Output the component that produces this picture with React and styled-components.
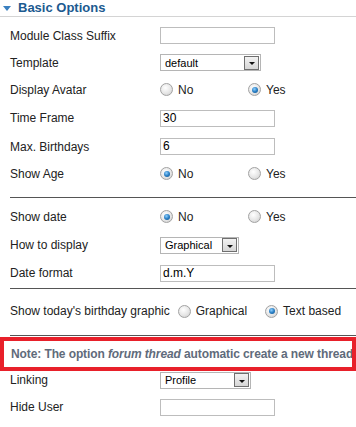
import styled, { createGlobalStyle } from 'styled-components';

const GlobalStyle = createGlobalStyle`
  html, body {
    margin: 0;
    padding: 0;
    background: #fff;
  }
  body {
    font-family: "Liberation Sans", Arial, sans-serif;
    font-size: 12px;
    color: #222;
  }
`;

const Panel = styled.div`
  width: 356px;
  height: 427px;
  overflow: hidden;
  display: flex;
  flex-direction: column;
`;

const Header = styled.div`
  height: 16px;
  border-bottom: 1px solid #d4d4d4;
  display: flex;
  align-items: center;
  gap: 7px;
  padding-left: 3px;
  margin-bottom: 5px;
`;

const Arrow = styled.span`
  width: 0;
  height: 0;
  border-left: 4px solid transparent;
  border-right: 4px solid transparent;
  border-top: 5px solid #3a80c0;
  margin-top: 1px;
`;

const Title = styled.span`
  font-size: 13px;
  font-weight: bold;
  color: #1c5a90;
  line-height: 16px;
`;

const Row = styled.div`
  height: ${p => p.h}px;
  margin-top: ${p => p.mt || 0}px;
  padding-left: 10px;
  display: flex;
  align-items: center;
  flex-shrink: 0;
`;

const Label = styled.span`
  width: ${p => (p.inline ? 'auto' : '150px')};
  margin-right: ${p => (p.inline ? '8px' : '0')};
  flex-shrink: 0;
  white-space: nowrap;
`;

const TextInput = styled.div`
  width: 111px;
  height: 15px;
  border: 1px solid #bdbdbd;
  padding-left: 2px;
  font-size: 12px;
  line-height: 15px;
  color: #000;
`;

const Select = styled.div`
  width: ${p => p.w}px;
  height: 15px;
  border: 1px solid #b5b5b5;
  display: flex;
  align-items: center;
  justify-content: space-between;
  font-size: 11px;
  color: #000;
  padding-left: 4px;
  box-sizing: content-box;
`;

const SelectButton = styled.span`
  width: 13px;
  height: 12px;
  margin-right: 1px;
  border: 1px solid #6f6f6f;
  background: linear-gradient(#f2f2f2, #d6d6d6);
  display: flex;
  align-items: center;
  justify-content: center;
  &::after {
    content: '';
    border-left: 3px solid transparent;
    border-right: 3px solid transparent;
    border-top: 3px solid #111;
    margin-top: 2px;
  }
`;

const Option = styled.span`
  display: flex;
  align-items: center;
  gap: 5px;
  width: ${p => (p.w ? `${p.w}px` : 'auto')};
  margin-right: ${p => p.mr || 0}px;
  white-space: nowrap;
`;

const Radio = styled.span`
  width: 11px;
  height: 11px;
  border-radius: 50%;
  border: 1px solid #a2a2a2;
  background: radial-gradient(circle at 40% 35%, #ffffff 0%, #e6e6e6 55%, #c9c9c9 100%);
  display: flex;
  align-items: center;
  justify-content: center;
  flex-shrink: 0;
  &::after {
    content: '';
    display: ${p => (p.checked ? 'block' : 'none')};
    width: 6px;
    height: 6px;
    border-radius: 50%;
    background: radial-gradient(circle at 40% 35%, #8fd0ff 0%, #2a7fc4 50%, #0d4f8a 100%);
  }
`;

const Divider = styled.div`
  height: 1px;
  margin-left: 10px;
  margin-top: ${p => p.mt || 0}px;
  background: #555;
  flex-shrink: 0;
`;

const Note = styled.div`
  height: 26px;
  margin-top: 1px;
  border: 4px solid #e8202a;
  padding-left: 7px;
  display: flex;
  align-items: center;
  white-space: nowrap;
  overflow: hidden;
  font-weight: bold;
  letter-spacing: -0.1px;
  color: #5f6b7b;
  flex-shrink: 0;
  em {
    font-style: italic;
  }
`;

function RadioPair({ value, labels = ['No', 'Yes'], widths = [88] }) {
  return (
    <>
      {labels.map((l, i) => (
        <Option key={l} w={widths[i]}>
          <Radio checked={value === i} />
          {l}
        </Option>
      ))}
    </>
  );
}

export default function App() {
  return (
    <Panel>
      <GlobalStyle />
      <Header>
        <Arrow />
        <Title>Basic Options</Title>
      </Header>

      <Row h={27}>
        <Label>Module Class Suffix</Label>
        <TextInput />
      </Row>
      <Row h={27}>
        <Label>Template</Label>
        <Select w={95}>
          default
          <SelectButton />
        </Select>
      </Row>
      <Row h={27}>
        <Label>Display Avatar</Label>
        <RadioPair value={1} />
      </Row>
      <Row h={30}>
        <Label>Time Frame</Label>
        <TextInput>30</TextInput>
      </Row>
      <Row h={27}>
        <Label>Max. Birthdays</Label>
        <TextInput>6</TextInput>
      </Row>
      <Row h={27}>
        <Label>Show Age</Label>
        <RadioPair value={0} />
      </Row>

      <Divider mt={10} />

      <Row h={27} mt={5}>
        <Label>Show date</Label>
        <RadioPair value={0} />
      </Row>
      <Row h={30}>
        <Label>How to display</Label>
        <Select w={73}>
          Graphical
          <SelectButton />
        </Select>
      </Row>
      <Row h={26}>
        <Label>Date format</Label>
        <TextInput>d.m.Y</TextInput>
      </Row>

      <Divider mt={2} />

      <Row h={26} mt={9}>
        <Label inline>Show today's birthday graphic</Label>
        <Option mr={18}>
          <Radio />
          Graphical
        </Option>
        <Option>
          <Radio checked />
          Text based
        </Option>
      </Row>

      <Divider mt={11} />

      <Note>
        Note: The option&nbsp;<em>forum thread</em>&nbsp;automatic create a new thread
      </Note>

      <Row h={18}>
        <Label>Linking</Label>
        <Select w={85}>
          Profile
          <SelectButton />
        </Select>
      </Row>
      <Row h={36}>
        <Label>Hide User</Label>
        <TextInput />
      </Row>
    </Panel>
  );
}
